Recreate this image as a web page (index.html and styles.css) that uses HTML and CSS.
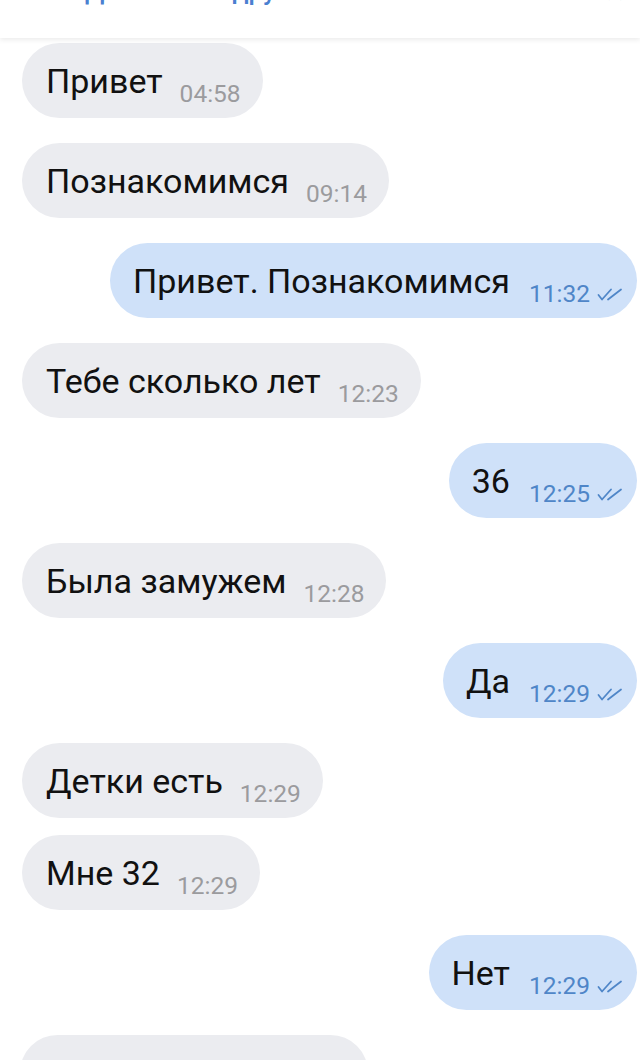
FILE: index.html
```html
<!DOCTYPE html>
<html lang="ru">
<head>
  <meta charset="UTF-8" />
  <meta name="viewport" content="width=device-width, initial-scale=1.0"/>
  <title>Чат</title>
  <link rel="stylesheet" href="styles.css">
</head>
<body>
  <div class="topbar">
    <div class="actions">
      <span class="add">Добавить в друзья</span>
      <span class="spam">Это спам</span>
    </div>
    <span class="close">✕</span>
  </div>

  <div class="chat">
    <div class="msg in"><span class="text">Привет</span><span class="time">04:58</span></div>
    <div class="msg in"><span class="text">Познакомимся</span><span class="time">09:14</span></div>
    <div class="msg out"><span class="text">Привет. Познакомимся</span><span class="time">11:32</span>
      <svg class="ticks" viewBox="0 0 26 13"><path d="M1.5 7L5 11.5L14 1.5M11 11.5L24 1.5"/></svg></div>
    <div class="msg in"><span class="text">Тебе сколько лет</span><span class="time">12:23</span></div>
    <div class="msg out"><span class="text">36</span><span class="time">12:25</span>
      <svg class="ticks" viewBox="0 0 26 13"><path d="M1.5 7L5 11.5L14 1.5M11 11.5L24 1.5"/></svg></div>
    <div class="msg in"><span class="text">Была замужем</span><span class="time">12:28</span></div>
    <div class="msg out"><span class="text">Да</span><span class="time">12:29</span>
      <svg class="ticks" viewBox="0 0 26 13"><path d="M1.5 7L5 11.5L14 1.5M11 11.5L24 1.5"/></svg></div>
    <div class="msg in"><span class="text">Детки есть</span><span class="time">12:29</span></div>
    <div class="msg in close-to-prev"><span class="text">Мне 32</span><span class="time">12:29</span></div>
    <div class="msg out"><span class="text">Нет</span><span class="time">12:29</span>
      <svg class="ticks" viewBox="0 0 26 13"><path d="M1.5 7L5 11.5L14 1.5M11 11.5L24 1.5"/></svg></div>
    <div class="msg in last"><span class="text">Что делаешь?</span><span class="time">12:30</span></div>
  </div>
</body>
</html>
```

FILE: styles.css
```css
* {
  box-sizing: border-box;
  font-family: Roboto, 'Noto Sans', sans-serif;
}
html, body {
  margin: 0;
  padding: 0;
  background: #fff;
  height: 1060px;
  overflow: hidden;
}
.topbar {
  height: 38px;
  overflow: hidden;
  display: flex;
  align-items: flex-start;
  justify-content: space-between;
  padding: 0 14px 0 85px;
  background: #fff;
  box-shadow: 0 2px 5px rgba(0, 0, 0, 0.08);
  position: relative;
  z-index: 1;
}
.actions {
  margin-top: -24px;
  font-size: 26px;
  font-weight: 500;
  line-height: 30px;
}
.add {
  color: #4a80d0;
}
.spam {
  color: #dc5a58;
  margin-left: 4px;
}
.close {
  margin-top: -22px;
  font-size: 26px;
  color: #777;
  line-height: 30px;
}
.chat {
  display: flex;
  flex-direction: column;
  padding: 5px 3px 0 22px;
}
.msg {
  display: flex;
  align-items: center;
  height: 75px;
  border-radius: 38px;
  padding: 0 22px 0 24px;
  margin-top: 25px;
  color: #111;
}
.msg:first-child {
  margin-top: 0;
}
.close-to-prev {
  margin-top: 17px;
}
.in {
  align-self: flex-start;
  background: #ebecf0;
}
.out {
  align-self: flex-end;
  background: #cfe1f9;
  padding: 0 14px 0 23px;
}
.last {
  margin-left: -2px;
}
.text {
  font-size: 34px;
  line-height: 40px;
}
.time {
  font-size: 24.5px;
  line-height: 28px;
  margin-top: 26px;
  margin-left: 17px;
  color: #9b9b9e;
}
.out .time {
  margin-left: 19px;
  color: #4f86c8;
}
.ticks {
  width: 26px;
  height: 13px;
  margin-top: 28px;
  margin-left: 7px;
  fill: none;
  stroke: #4f86c8;
  stroke-width: 1.8;
  stroke-linecap: round;
  stroke-linejoin: round;
}
```
